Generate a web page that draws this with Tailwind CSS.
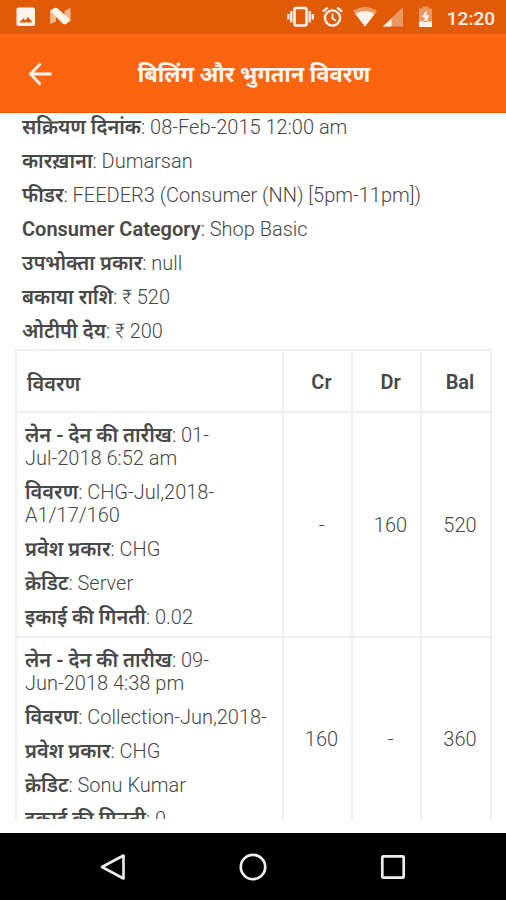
<!DOCTYPE html>
<html lang="hi">
<head>
<meta charset="utf-8">
<meta name="viewport" content="width=device-width, initial-scale=1">
<title>बिलिंग और भुगतान विवरण</title>
<script src="https://cdn.jsdelivr.net/npm/@tailwindcss/browser@4"></script>
</head>
<body class="flex h-screen flex-col bg-white font-['Roboto','Noto_Sans_Devanagari','Noto_Sans',sans-serif] text-[20px] leading-[23px] text-[#484848]">

<!-- Status bar -->
<div class="flex h-[34px] shrink-0 items-center justify-between bg-[#e05a08] pr-[11px] pl-4 text-[#fff4ec]">
  <div class="flex items-center gap-[14px]">
    <svg class="h-5 w-5" viewBox="0 0 20 20" aria-hidden="true"><path fill="currentColor" fill-rule="evenodd" d="M2.500 0.500h14.500a2 2 0 0 1 2 2v14.500a2 2 0 0 1-2 2h-14.500a2 2 0 0 1-2-2v-14.500a2 2 0 0 1 2-2ZM3 15.500h13.500l-4.300-5.500-2.700 3.500-2-2.300Z"/></svg>
    <svg class="h-5 w-[21px]" viewBox="0 0 21 20" aria-hidden="true"><path fill="currentColor" opacity=".6" d="M0 4.500L6 1.500V14.500L0 17ZM14.500 4L20.500 1V14L14.500 17Z"/><path fill="currentColor" d="M0 3.500L4.500 1Q6.500 0.500 8 1.700L20.500 13L16 17Q14 17.800 12.500 16.500Z"/></svg>
  </div>
  <div class="flex items-center">
    <svg class="mr-[8px] h-[22px] w-[27px]" viewBox="0 0 27 22" aria-hidden="true"><rect x="7.500" y="2" width="12" height="17.500" rx="1.500" fill="none" stroke="currentColor" stroke-width="2.600"/><path fill="none" stroke="currentColor" stroke-width="2.300" d="M4.300 5V16.500M1.300 8V13.500M22.700 5V16.500M25.700 8V13.500"/></svg>
    <svg class="mr-[10px] h-[22px] w-[21px]" viewBox="0 0 21 22" aria-hidden="true"><circle cx="10.500" cy="12" r="7.600" fill="none" stroke="currentColor" stroke-width="2.400"/><path fill="none" stroke="currentColor" stroke-width="2.200" d="M0.800 5.700L5.800 1.600M20.200 5.700L15.200 1.600"/><path fill="none" stroke="currentColor" stroke-width="1.800" d="M10.500 7.500V12.500L14 14.800"/></svg>
    <svg class="mr-[6px] h-[22px] w-6" viewBox="0 0 24 22" aria-hidden="true"><path fill="currentColor" opacity=".4" d="M0 5Q12-3 24 5L12 20.500Z"/><path fill="currentColor" d="M2.200 7.800Q12 2.300 21.800 7.800L12 20.500Z"/></svg>
    <svg class="mr-[15px] h-[22px] w-5" viewBox="0 0 20 22" aria-hidden="true"><path fill="currentColor" opacity=".4" d="M20 1V20.500H0Z"/><path fill="currentColor" d="M8.500 12.200V20.500H0Z"/></svg>
    <svg class="mr-[14px] h-[22px] w-[15px]" viewBox="0 0 15 22" aria-hidden="true"><path fill="currentColor" opacity=".4" d="M4.500 0.500h6V2.500H14V15H1V2.500H4.500Z"/><path fill="currentColor" d="M1 15.200H14V21H1ZM8.500 4.500L3.700 11H6.500V16H8.500L11.300 9.300H8.500Z"/></svg>
    <span class="pt-[2px] text-[19px] font-medium">12:20</span>
  </div>
</div>

<!-- App bar -->
<header class="grid h-[79px] shrink-0 grid-cols-[80px_1fr_78px] items-center border-b border-[#e05a08] bg-[#fb6510] pt-[2px] text-[#fff6f0]">
  <button type="button" aria-label="वापस" class="flex h-12 items-center justify-center">
    <svg class="h-6 w-6" viewBox="0 0 24 24" fill="none" stroke="currentColor" stroke-width="2.800" aria-hidden="true"><path d="M12.500 1.500L2.500 12L12.500 22.500M2.500 12H23.500"/></svg>
  </button>
  <h1 class="pt-[2px] text-center text-[22px] leading-7 font-bold whitespace-nowrap">बिलिंग और भुगतान विवरण</h1>
</header>

<main class="mb-[14px] min-h-0 flex-1 overflow-hidden pt-[3px] pr-[14px] pl-[15px] font-light">
  <div class="flex flex-col gap-[11px] pb-[6px] pl-[7px]">
    <p class="h-[23px]"><b class="font-semibold">सक्रियण दिनांक</b>: 08-Feb-2015 12:00 am</p>
    <p class="h-[23px]"><b class="font-semibold">कारख़ाना</b>: Dumarsan</p>
    <p class="h-[23px]"><b class="font-semibold">फीडर</b>: FEEDER3 (Consumer (NN) [5pm-11pm])</p>
    <p class="h-[23px]"><b class="font-semibold">Consumer Category</b>: Shop Basic</p>
    <p class="h-[23px]"><b class="font-semibold">उपभोक्ता प्रकार</b>: null</p>
    <p class="h-[23px]"><b class="font-semibold">बकाया राशि</b>: ₹ 520</p>
    <p class="h-[23px]"><b class="font-semibold">ओटीपी देय</b>: ₹ 200</p>
  </div>

  <table class="w-full table-fixed border-collapse text-center [&_td]:border-2 [&_td]:border-[#f0f0f0] [&_th]:border-2 [&_th]:border-[#f0f0f0] [&_th]:font-semibold">
    <colgroup><col><col class="w-[69px]"><col class="w-[69px]"><col class="w-[70px]"></colgroup>
    <thead>
      <tr class="h-[62px]"><th scope="col" class="pt-[6px] pl-[10px] text-left">विवरण</th><th scope="col" class="pt-[2px] pl-[8px]">Cr</th><th scope="col" class="pt-[2px] pl-[8px]">Dr</th><th scope="col" class="pt-[2px] pl-[8px]">Bal</th></tr>
    </thead>
    <tbody>
      <tr>
        <td class="pt-[11px] pr-3 pb-[7px] pl-[8px] text-left">
          <div class="flex flex-col gap-[11px]">
            <p><b class="font-semibold">लेन - देन की तारीख</b>: 01-<br>Jul-2018 6:52 am</p>
            <p><b class="font-semibold">विवरण</b>: CHG-Jul,2018-<br>A1/17/160</p>
            <p><b class="font-semibold">प्रवेश प्रकार</b>: CHG</p>
            <p><b class="font-semibold">क्रेडिट</b>: Server</p>
            <p><b class="font-semibold">इकाई की गिनती</b>: 0.02</p>
          </div>
        </td>
        <td class="pt-[2px] pl-[8px]">-</td><td class="pt-[2px] pl-[8px]">160</td><td class="pt-[2px] pl-[8px]">520</td>
      </tr>
      <tr>
        <td class="pt-[11px] pr-3 pb-[7px] pl-[8px] text-left">
          <div class="flex flex-col gap-[11px]">
            <p><b class="font-semibold">लेन - देन की तारीख</b>: 09-<br>Jun-2018 4:38 pm</p>
            <p class="whitespace-nowrap"><b class="font-semibold">विवरण</b>: Collection-Jun,2018-</p>
            <p><b class="font-semibold">प्रवेश प्रकार</b>: CHG</p>
            <p><b class="font-semibold">क्रेडिट</b>: Sonu Kumar</p>
            <p><b class="font-semibold">इकाई की गिनती</b>: 0</p>
          </div>
        </td>
        <td class="pt-[2px] pl-[8px]">160</td><td class="pt-[2px] pl-[8px]">-</td><td class="pt-[2px] pl-[8px]">360</td>
      </tr>
    </tbody>
  </table>
</main>

<!-- System navigation -->
<nav class="flex h-[67px] shrink-0 items-center justify-center gap-[112px] bg-black text-[#eeeeee]">
  <button type="button" aria-label="Back"><svg class="h-7 w-7" viewBox="0 0 28 28" fill="none" stroke="currentColor" stroke-width="2.600" stroke-linejoin="round" aria-hidden="true"><path d="M24.500 2.500V25.500L3 14Z"/></svg></button>
  <button type="button" aria-label="Home"><svg class="h-7 w-7" viewBox="0 0 28 28" fill="none" stroke="currentColor" stroke-width="2.700" aria-hidden="true"><circle cx="14" cy="14" r="12.200"/></svg></button>
  <button type="button" aria-label="Recent apps"><svg class="h-7 w-7" viewBox="0 0 28 28" fill="none" stroke="currentColor" stroke-width="2.700" aria-hidden="true"><rect x="3.300" y="3.300" width="21.400" height="21.400" rx="1"/></svg></button>
</nav>
</body>
</html>
